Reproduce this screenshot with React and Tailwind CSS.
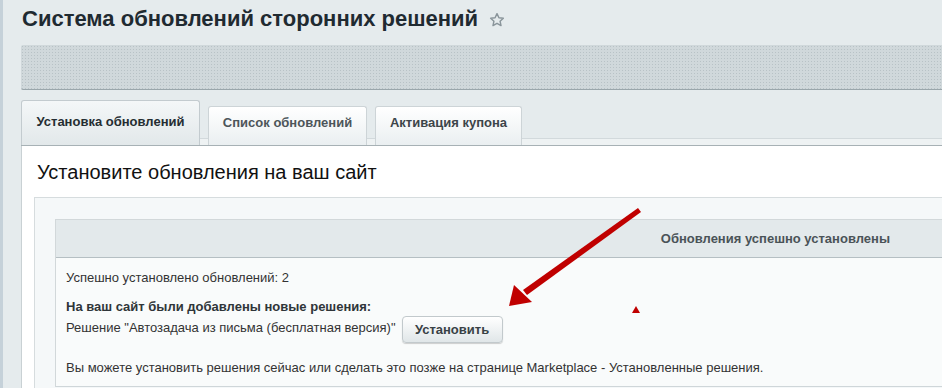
import React from "react";

const Star = () => (
  <svg width="16" height="16" viewBox="0 0 24 24" className="ml-[11px] mt-[2px]">
    <polygon
      points="12,2.5 14.9,8.6 21.5,9.3 16.6,13.8 18,20.4 12,17 6,20.4 7.4,13.8 2.5,9.3 9.1,8.6"
      fill="none"
      stroke="#8a959b"
      strokeWidth="2.2"
      strokeLinejoin="round"
    />
  </svg>
);

const Arrow = () => (
  <svg className="absolute inset-0 pointer-events-none" width="942" height="388">
    <polygon points="635,208 638,212 524,295 520,290" fill="#c00000" />
    <polygon points="506,306 511,285 529,302" fill="#c00000" />
    <polygon points="633,306 637,313 629,313" fill="#c00000" />
  </svg>
);

export default function App() {
  return (
    <div className="relative w-[942px] h-[388px] overflow-hidden bg-[#e5ebed] border-l-[3px] border-[#c5d1d9] pl-[18px] font-['Liberation_Sans',Arial,sans-serif]">
      {/* Title */}
      <div className="flex items-center h-[45px] pb-[8px] pl-[1px]">
        <h1 className="text-[22px] leading-[24px] font-bold text-[#1f2a31]">
          Система обновлений сторонних решений
        </h1>
        <Star />
      </div>

      {/* Dotted toolbar */}
      <div className="h-[45px] rounded-l-[2px] border-b border-[#9aa6ab] bg-[#d0d8db] bg-[radial-gradient(#b8c2c6_0.7px,transparent_0.7px)] bg-[length:3px_3px]"></div>

      {/* Tabs */}
      <div className="mt-[10px] flex items-end gap-[8px] h-[46px] border-b border-[#a7b1b5] bg-[linear-gradient(to_bottom,transparent_38px,#d2d9dc_38px,#d2d9dc_39px,#eef2f3_39px)]">
        <div className="w-[179px] h-[45px] flex items-center justify-center pb-[3px] rounded-t-[3px] border border-b-0 border-[#c3cbcf] bg-[linear-gradient(to_bottom,#f4f7f8,#e2e8ea)] text-[13px] font-bold text-[#252d32]">
          Установка обновлений
        </div>
        <div className="w-[159px] h-[39px] flex items-center justify-center pb-[7px] rounded-t-[3px] border border-b-0 border-[#cdd4d7] bg-[linear-gradient(to_bottom,#ffffff,#eaeff1)] text-[13px] font-bold text-[#4d555a]">
          Список обновлений
        </div>
        <div className="w-[147px] h-[39px] flex items-center justify-center pb-[7px] rounded-t-[3px] border border-b-0 border-[#cdd4d7] bg-[linear-gradient(to_bottom,#ffffff,#eaeff1)] text-[13px] font-bold text-[#3d454a]">
          Активация купона
        </div>
      </div>

      {/* Content panel */}
      <div className="bg-white border-l border-[#c9d1d4] pl-[12px] h-[260px]">
        <h2 className="pl-[3px] pt-[14px] text-[20px] leading-[24px] text-[#111]">
          Установите обновления на ваш сайт
        </h2>

        <div className="mt-[13px] border-l border-t border-[#d6dcde] bg-[#f5f8f9] pl-[20px] pt-[21px] h-[200px]">
          <div className="border-l border-t border-[#d2d8da]">
            <div className="h-[38px] flex items-center justify-end pr-[52px] bg-[#e3e9eb] border-b border-[#b5bfc3] text-[13px] font-bold text-[#4a5357]">
              Обновления успешно установлены
            </div>
            <div className="bg-[#f9fbfb] pl-[10px] pt-[12px] pb-[10px] border-b border-[#cfd6d9] text-[13px] leading-[16px] text-[#333]">
              <p>Успешно установлено обновлений: 2</p>
              <p className="mt-[13px] font-bold text-[#2f3539]">На ваш сайт были добавлены новые решения:</p>
              <div className="flex items-center h-[27px] mt-[1px]">
                <span className="-mt-[3px]">Решение "Автозадача из письма (бесплатная версия)"</span>
                <button className="ml-[6px] h-[27px] w-[101px] rounded-[4px] border border-[#c2c9cc] bg-[linear-gradient(to_bottom,#ffffff,#e0e6e8)] shadow-[0_1px_1px_rgba(0,0,0,0.18)] text-[13px] font-bold text-[#384145]">
                  Установить
                </button>
              </div>
              <p className="mt-[17px]">
                Вы можете установить решения сейчас или сделать это позже на странице Marketplace - Установленные решения.
              </p>
            </div>
          </div>
        </div>
      </div>

      <Arrow />
    </div>
  );
}
